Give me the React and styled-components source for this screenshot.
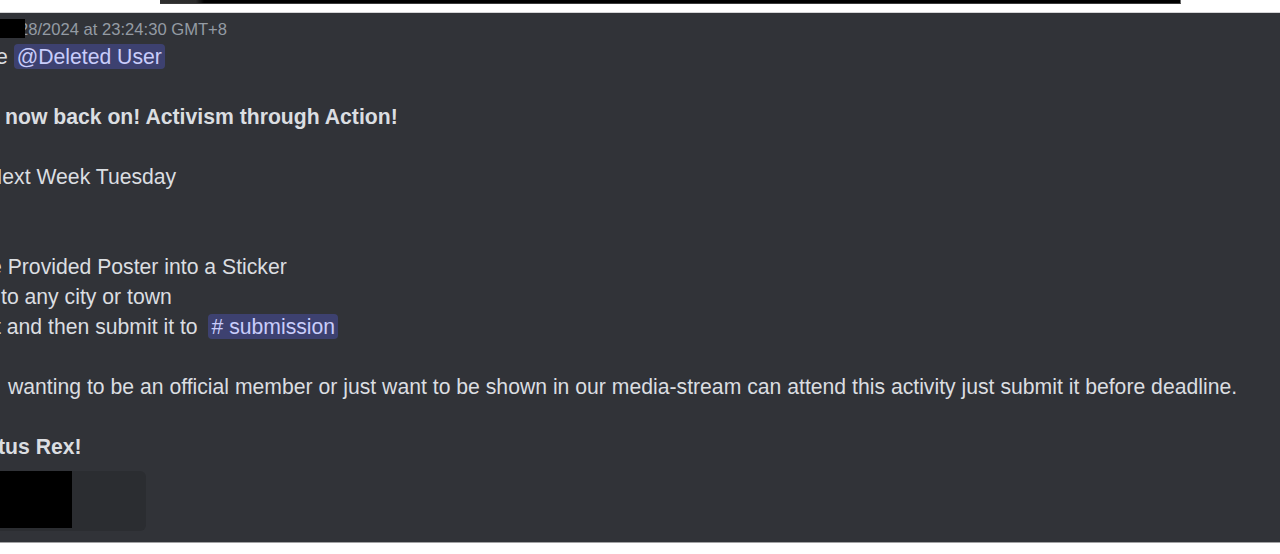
import React from "react";
import styled, { createGlobalStyle } from "styled-components";

const GlobalStyle = createGlobalStyle`
  html, body {
    margin: 0;
    padding: 0;
    background: #ffffff;
  }
  body {
    font-family: "Liberation Sans", Arial, sans-serif;
  }
`;

const Page = styled.div`
  width: 1280px;
  height: 554px;
  display: flex;
  flex-direction: column;
  overflow: hidden;
`;

const TopStrip = styled.div`
  height: 12px;
  background: #ffffff;
  display: flex;
`;

const WindowEdge = styled.div`
  margin-left: 160px;
  width: 1020px;
  height: 3px;
  background: linear-gradient(to right, #2f2f2f 0, #2a2a2a 36px, #000000 44px);
  border-right: 1px solid #6a6a6a;
  border-bottom: 1px solid #3a3a3a;
`;

const Panel = styled.div`
  height: 524px;
  background: #313338;
  border-top: 1px solid #d4d4d6;
  border-bottom: 1px solid #a2a2a4;
  overflow: hidden;
  padding-top: 5px;
  box-sizing: content-box;
`;

const Message = styled.div`
  display: flex;
  flex-direction: column;
  color: #dbdee1;
  font-size: 21.2px;
  line-height: 30px;
`;

const Header = styled.div`
  position: relative;
  height: 22px;
  margin-bottom: 2px;
`;

const Timestamp = styled.span`
  display: block;
  margin-left: 19px;
  font-size: 16.6px;
  line-height: 23px;
  color: #949ba4;
  white-space: nowrap;
`;

const Redaction = styled.div`
  position: absolute;
  left: 0;
  top: 1px;
  width: 25px;
  height: 19px;
  background: #000000;
`;

const Line = styled.div`
  height: 30px;
  margin-left: ${({ $shift }) => $shift || 0}px;
  white-space: nowrap;
  font-weight: ${({ $bold }) => ($bold ? 700 : 400)};
`;

const Mention = styled.span`
  background: rgba(88, 101, 242, 0.3);
  color: #c9cdfb;
  border-radius: 4px;
  padding: 1px 3px;
  margin-left: ${({ $gap }) => $gap || 0}px;
`;

const Embed = styled.div`
  margin-top: 9px;
  margin-left: -10px;
  width: 156px;
  height: 60px;
  background: #2b2d31;
  border-radius: 6px;
  display: flex;
`;

const Thumb = styled.div`
  width: 82px;
  height: 57px;
  background: #000000;
`;

const App = () => {
  return (
    <>
      <GlobalStyle />
      <Page>
        <TopStrip>
          <WindowEdge />
        </TopStrip>
        <Panel>
          <Message>
            <Header>
              <Timestamp>28/2024 at 23:24:30 GMT+8</Timestamp>
              <Redaction />
            </Header>
            <Line $shift={-4}>
              e <Mention>@Deleted User</Mention>
            </Line>
            <Line />
            <Line $shift={5} $bold>
              now back on! Activism through Action!
            </Line>
            <Line />
            <Line $shift={-13}>Next Week Tuesday</Line>
            <Line />
            <Line />
            <Line $shift={-10}>e Provided Poster into a Sticker</Line>
            <Line $shift={1}>to any city or town</Line>
            <Line $shift={-5}>
              t and then submit it to <Mention $gap={5}># submission</Mention>
            </Line>
            <Line />
            <Line $shift={8}>
              wanting to be an official member or just want to be shown in our
              media-stream can attend this activity just submit it before
              deadline.
            </Line>
            <Line />
            <Line $shift={-2} $bold>
              tus Rex!
            </Line>
            <Embed>
              <Thumb />
            </Embed>
          </Message>
        </Panel>
      </Page>
    </>
  );
};

export default App;
